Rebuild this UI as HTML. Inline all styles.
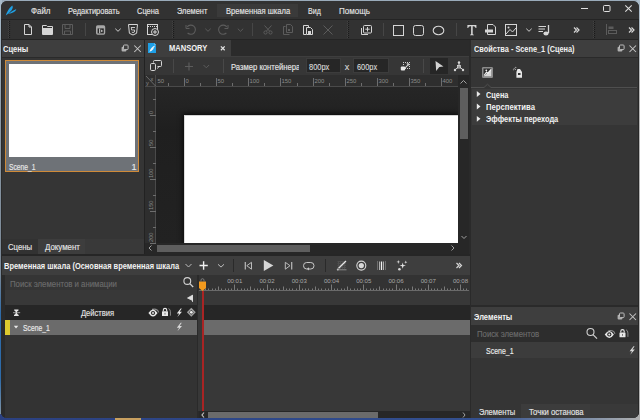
<!DOCTYPE html>
<html><head><meta charset="utf-8">
<style>
*{margin:0;padding:0;box-sizing:border-box}
html,body{width:640px;height:420px;overflow:hidden}
body{position:relative;background:#9aabba;font-family:"Liberation Sans", sans-serif}
.a{position:absolute}
.t{position:absolute;white-space:nowrap;line-height:1}
svg{position:absolute;overflow:visible}
#clip{position:absolute;left:0;top:0;width:640px;height:420px;clip-path:inset(1px 1px 2px 1px round 6px);background:#333}
</style></head><body>
<div class="a" style="left:0;top:0;width:2px;height:420px;background:linear-gradient(#a9bccb,#8a98a5 30%,#7a8896 65%,#2d6aa8 75%,#2d6aa8 90%,#8d9aa5)"></div><div class="a" style="left:637px;top:0;width:3px;height:420px;background:linear-gradient(#a9bccb,#b5b5b5 20%,#b0b0b0)"></div><div class="a" style="left:0;top:414px;width:640px;height:6px;background:linear-gradient(90deg,#2b4080,#2f4a8c 50%,#34508f 75%,#8090a8 92%,#b0b0b0)"></div><div class="a" style="left:115px;top:418px;width:26px;height:2px;background:#c8a060"></div>
<div id="clip">
<div class="a" style="left:0px;top:0px;width:640px;height:19px;background:#323232;"></div><div class="a" style="left:0px;top:19px;width:640px;height:1px;background:#242424;"></div><div class="a" style="left:0px;top:20px;width:640px;height:19px;background:#323232;"></div><div class="a" style="left:0px;top:39px;width:640px;height:1px;background:#242424;"></div><div class="a" style="left:217px;top:4px;width:81px;height:13px;background:#3a3a3a;"></div><div class="a" style="left:0px;top:40px;width:144px;height:215px;background:#353535;"></div><div class="a" style="left:0px;top:40px;width:144px;height:17px;background:#3e3e3e;"></div><div class="a" style="left:0px;top:57px;width:144px;height:1px;background:#2a2a2a;"></div><div class="a" style="left:144px;top:40px;width:1px;height:215px;background:#222;"></div><div class="a" style="left:5px;top:60px;width:134px;height:112px;background:#cf8a38;"></div><div class="a" style="left:6px;top:61px;width:132px;height:110px;background:#6e7277;"></div><div class="a" style="left:9px;top:64px;width:126px;height:93px;background:#ffffff;"></div><div class="a" style="left:145px;top:40px;width:325px;height:16px;background:#2b2b2b;"></div><div class="a" style="left:145px;top:56px;width:325px;height:1px;background:#3e3e3e;"></div><div class="a" style="left:145px;top:40px;width:86px;height:17px;background:#3e3e3e;"></div><div class="a" style="left:145px;top:57px;width:325px;height:18px;background:#363636;"></div><div class="a" style="left:145px;top:75px;width:313px;height:11px;background:#2e2e2e;"></div><div class="a" style="left:145px;top:86px;width:313px;height:1px;background:#4a4a4a;"></div><div class="a" style="left:155px;top:75px;width:1px;height:168px;background:#4a4a4a;"></div><div class="a" style="left:156px;top:87px;width:302px;height:156px;background:linear-gradient(#262626,#1f1f1f 28%,#222 100%);"></div><div class="a" style="left:145px;top:87px;width:10px;height:156px;background:#2e2e2e;"></div><div class="a" style="left:184px;top:115px;width:274px;height:128px;background:#ffffff;box-shadow:0 0 5px 1px rgba(0,0,0,0.75);border-top:1px solid #d4d4d4;border-left:1px solid #dcdcdc"></div><div class="a" style="left:458px;top:75px;width:11px;height:168px;background:#272727;"></div><div class="a" style="left:460px;top:88px;width:8px;height:51px;background:#5e5e5e;"></div><div class="a" style="left:145px;top:243px;width:324px;height:11px;background:#272727;"></div><div class="a" style="left:157px;top:245px;width:153px;height:7px;background:#5e5e5e;"></div><div class="a" style="left:469px;top:40px;width:2px;height:380px;background:#2a2a2a;"></div><div class="a" style="left:298.5px;top:58px;width:7.5px;height:16px;background:#363636;z-index:5"></div><div class="a" style="left:306px;top:58px;width:35px;height:15px;background:#262626;border:1px solid #3c3c3c"></div><div class="a" style="left:353px;top:58px;width:36px;height:15px;background:#262626;border:1px solid #3c3c3c"></div><div class="a" style="left:430px;top:58px;width:18px;height:16px;background:#262626;"></div><div class="a" style="left:471px;top:40px;width:169px;height:266px;background:#353535;"></div><div class="a" style="left:471px;top:40px;width:169px;height:17px;background:#3e3e3e;"></div><div class="a" style="left:471px;top:57px;width:169px;height:1px;background:#2a2a2a;"></div><div class="a" style="left:472px;top:89px;width:165px;height:36px;background:#3c3c3c;"></div><div class="a" style="left:471px;top:305px;width:169px;height:2px;background:#2a2a2a;"></div><div class="a" style="left:471px;top:307px;width:169px;height:18px;background:#3e3e3e;"></div><div class="a" style="left:471px;top:325px;width:169px;height:17px;background:#2d2d2d;"></div><div class="a" style="left:471px;top:342px;width:169px;height:16px;background:#3c3c3c;"></div><div class="a" style="left:471px;top:358px;width:169px;height:46px;background:#353535;"></div><div class="a" style="left:471px;top:404px;width:169px;height:16px;background:#353535;"></div><div class="a" style="left:521px;top:404px;width:69px;height:16px;background:#3c3c3c;"></div><div class="a" style="left:590px;top:404px;width:50px;height:16px;background:#393939;"></div><div class="a" style="left:0px;top:239px;width:38px;height:15px;background:#323232;"></div><div class="a" style="left:38px;top:239px;width:47px;height:15px;background:#3d3d3d;"></div><div class="a" style="left:85px;top:239px;width:59px;height:15px;background:#393939;"></div><div class="a" style="left:0px;top:254px;width:470px;height:2px;background:#262626;"></div><div class="a" style="left:0px;top:256px;width:470px;height:19px;background:#3e3e3e;"></div><div class="a" style="left:0px;top:275px;width:197px;height:145px;background:#333333;"></div><div class="a" style="left:0px;top:275px;width:197px;height:15px;background:#353535;"></div><div class="a" style="left:0px;top:290px;width:197px;height:15px;background:#383838;"></div><div class="a" style="left:0px;top:305px;width:197px;height:15px;background:#262626;"></div><div class="a" style="left:0px;top:320px;width:197px;height:15px;background:#6b6b6b;"></div><div class="a" style="left:5px;top:320px;width:5px;height:15px;background:#dcc92e;"></div><div class="a" style="left:197px;top:275px;width:2px;height:145px;background:#2a2a2a;"></div><div class="a" style="left:199px;top:275px;width:271px;height:15px;background:#333333;"></div><div class="a" style="left:199px;top:290px;width:271px;height:15px;background:#383838;"></div><div class="a" style="left:199px;top:305px;width:271px;height:15px;background:#262626;"></div><div class="a" style="left:199px;top:320px;width:271px;height:15px;background:#6b6b6b;"></div><div class="a" style="left:199px;top:335px;width:271px;height:76px;background:#383838;"></div><div class="a" style="left:199px;top:411px;width:271px;height:9px;background:#272727;"></div><div class="a" style="left:208px;top:412px;width:170px;height:6px;background:#6b6b6b;"></div><div class="a" style="left:198px;top:290px;width:4px;height:121px;background:#383838;"></div><div class="a" style="left:202px;top:290px;width:2px;height:121px;background:#a92424;"></div><div class="a" style="left:1px;top:20px;width:1px;height:400px;background:#2a2a2a;"></div><div class="a" style="left:1px;top:275px;width:4px;height:143px;background:#2a2a2a;"></div><div class="a" style="left:638px;top:20px;width:1px;height:400px;background:#282828;"></div>
<svg style="left:0;top:0" width="640" height="420" viewBox="0 0 640 420"><path d="M5.8,15.4 Q7.6,9.4 12.2,5.4 Q13.6,7 11.6,10.2 Q9.4,13.2 5.8,15.4 Z M8.4,14 Q12,10.6 16.4,9 Q15.8,11.2 13.6,12.2 Q11.2,13.4 8.4,14 Z" fill="#1fa0e4"/><line x1="9.5" y1="21" x2="9.5" y2="38" stroke="#1a1a1a" stroke-width="1.2" stroke-dasharray="1,1"/><line x1="8.5" y1="21" x2="8.5" y2="38" stroke="#424242" stroke-width="1" stroke-dasharray="1,1"/><line x1="173.5" y1="21" x2="173.5" y2="38" stroke="#1a1a1a" stroke-width="1.2" stroke-dasharray="1,1"/><line x1="172.5" y1="21" x2="172.5" y2="38" stroke="#424242" stroke-width="1" stroke-dasharray="1,1"/><line x1="348.5" y1="21" x2="348.5" y2="38" stroke="#1a1a1a" stroke-width="1.2" stroke-dasharray="1,1"/><line x1="347.5" y1="21" x2="347.5" y2="38" stroke="#424242" stroke-width="1" stroke-dasharray="1,1"/><line x1="594.5" y1="21" x2="594.5" y2="38" stroke="#1a1a1a" stroke-width="1.2" stroke-dasharray="1,1"/><line x1="593.5" y1="21" x2="593.5" y2="38" stroke="#424242" stroke-width="1" stroke-dasharray="1,1"/><line x1="85.5" y1="23" x2="85.5" y2="36" stroke="#464646"/><line x1="252.5" y1="23" x2="252.5" y2="36" stroke="#464646"/><line x1="383.5" y1="23" x2="383.5" y2="36" stroke="#464646"/><line x1="456.5" y1="23" x2="456.5" y2="36" stroke="#464646"/><path d="M24.5,24.5 H29 L31.5,27 V34.5 H24.5 Z M29,24.5 V27 H31.5" fill="none" stroke="#d6d6d6"/><path d="M42.5,25.5 H46.5 L47.5,26.5 H52.5 V34.5 H42.5 Z" fill="none" stroke="#d6d6d6"/><rect x="43" y="28" width="10" height="6" fill="#d6d6d6"/><path d="M62.5,24.5 H72.5 V34.5 H62.5 Z M65,24.5 V28.5 H70 V24.5 M64.5,34.5 V31 H70.5 V34.5" fill="none" stroke="#5c5c5c"/><rect x="96" y="25.3" width="9.2" height="9.4" rx="1.6" fill="#a8a8a8"/><rect x="97.6" y="28.4" width="6.2" height="5" fill="#2a2a2a"/><rect x="99.2" y="28.6" width="1" height="4.6" fill="#d8d8d8"/><path d="M101.2,29.6 L103,30.9 L101.2,32.2 Z" fill="#d8d8d8"/><polyline points="115.3,28.7 118,31.3 120.7,28.7" fill="none" stroke="#d6d6d6" stroke-width="0.95"/><polyline points="205.3,28.7 208,31.3 210.7,28.7" fill="none" stroke="#5c5c5c" stroke-width="0.95"/><polyline points="237.8,28.7 240.5,31.3 243.2,28.7" fill="none" stroke="#5c5c5c" stroke-width="0.95"/><polyline points="526.3,28.7 529,31.3 531.7,28.7" fill="none" stroke="#d6d6d6" stroke-width="0.95"/><path d="M128.5,24.5 H137.5 L136.6,33.3 L133,35 L129.4,33.3 Z" fill="none" stroke="#d6d6d6"/><path d="M131,27.5 H135 M131.3,27.5 L131.6,30 H134.6 L134.4,32 L133,32.6 L131.8,32" fill="none" stroke="#d6d6d6" stroke-width="0.9"/><rect x="147.5" y="24.5" width="10" height="10" fill="none" stroke="#d6d6d6"/><line x1="148" y1="26.5" x2="157" y2="26.5" stroke="#d6d6d6" stroke-width="1" stroke-dasharray="1,1"/><circle cx="155" cy="32" r="3.5" fill="#323232" stroke="#d6d6d6"/><path d="M153,32 H157 M155,30 V34" stroke="#d6d6d6"/><path d="M187.2,26.8 A4.6,4.6 0 1 1 187.6,33" fill="none" stroke="#5c5c5c" stroke-width="1.1"/><path d="M186,25 V28.5 H189.5" fill="none" stroke="#5c5c5c"/><path d="M226.8,26.8 A4.6,4.6 0 1 0 226.4,33" fill="none" stroke="#5c5c5c" stroke-width="1.1"/><path d="M228,25 V28.5 H224.5" fill="none" stroke="#5c5c5c"/><circle cx="265.5" cy="32.5" r="1.6" fill="none" stroke="#5c5c5c"/><circle cx="270.5" cy="32.5" r="1.6" fill="none" stroke="#5c5c5c"/><path d="M264.5,25.5 L269.5,31 M271.5,25.5 L266.5,31" stroke="#5c5c5c"/><path d="M285.5,26.5 H283.5 V34.5 H289.5 M286.5,24.5 H290.5 L292.5,26.5 V32.5 H286.5 Z" fill="none" stroke="#5c5c5c"/><rect x="288" y="29" width="2" height="2" fill="#5c5c5c"/><path d="M303.5,25.5 H308.5 V27 M303.5,25.5 V34.5 H306" fill="none" stroke="#d6d6d6"/><path d="M306.5,27.5 H310.5 L312.5,29.5 V34.5 H306.5 Z" fill="none" stroke="#d6d6d6"/><rect x="308" y="31" width="3" height="3" fill="#d6d6d6"/><path d="M323.5,25.5 L332.5,34.5 M332.5,25.5 L323.5,34.5" stroke="#5c5c5c"/><path d="M361.5,28 V34.5 H368" fill="none" stroke="#d6d6d6" stroke-width="1"/><rect x="363.5" y="25.5" width="8" height="7.5" rx="1" fill="#323232" stroke="#d6d6d6"/><path d="M365.3,29.2 H369.7 M367.5,27 V31.5" stroke="#d6d6d6"/><rect x="393.5" y="25.5" width="10" height="10" fill="none" stroke="#d6d6d6"/><rect x="413.5" y="25.5" width="10" height="10" rx="2" fill="none" stroke="#d6d6d6"/><ellipse cx="438.5" cy="30.5" rx="5.3" ry="4.3" fill="none" stroke="#d6d6d6" stroke-width="1.1"/><path d="M467.4,25 H476.4 V28 H475.6 Q475.4,26.3 473.7,26.2 H472.7 V34 Q472.7,34.6 473.9,34.7 V35.3 H469.9 V34.7 Q471.1,34.6 471.1,34 V26.2 H470.1 Q468.4,26.3 468.2,28 H467.4 Z" fill="#d6d6d6"/><path d="M487.5,24.5 H493 L495.5,27 V34.5 H487.5 Z" fill="none" stroke="#d6d6d6"/><rect x="485" y="29.5" width="8" height="3" fill="#d6d6d6"/><rect x="505.5" y="24.5" width="11" height="11" fill="none" stroke="#d6d6d6"/><path d="M506,34 L510,29.5 L512.5,32 L516,28" fill="none" stroke="#d6d6d6"/><circle cx="508.5" cy="27.5" r="1" fill="#d6d6d6"/><path d="M538.5,26.5 H546 M538.5,29 H545 M538.5,31.5 H543" stroke="#d6d6d6"/><path d="M548.5,25 V33" stroke="#d6d6d6" stroke-width="1.3"/><ellipse cx="546" cy="33.5" rx="2.6" ry="1.9" fill="#d6d6d6"/><path d="M574,27.5 L576.5,30 L574,32.5 M576.5,27.5 L579,30 L576.5,32.5" fill="none" stroke="#d6d6d6" stroke-width="1.2"/><path d="M629,27.5 L631.5,30 L629,32.5 M631.5,27.5 L634,30 L631.5,32.5" fill="none" stroke="#d6d6d6" stroke-width="1.2"/><path d="M456.5,263.0 L459.0,265.5 L456.5,268.0 M459.0,263.0 L461.5,265.5 L459.0,268.0" fill="none" stroke="#d6d6d6" stroke-width="1.2"/><path d="M606.5,24 V35" stroke="#5c5c5c"/><rect x="608.5" y="26.5" width="5" height="2.5" fill="#5c5c5c"/><rect x="608.5" y="30.5" width="8" height="3" fill="none" stroke="#5c5c5c"/><path d="M581,8.5 H588" stroke="#e0e0e0"/><rect x="603.5" y="5.5" width="6.5" height="6" rx="1" fill="none" stroke="#e0e0e0"/><path d="M625.3,5.3 L631.7,11.7 M631.7,5.3 L625.3,11.7" stroke="#e0e0e0" stroke-width="1.05"/><rect x="121.6" y="46.7" width="4.8" height="4.8" rx="1.1" fill="#b0b0b0"/><rect x="123.5" y="45.0" width="4.6" height="4.6" rx="0.9" fill="#3e3e3e" stroke="#bcbcbc" stroke-width="1"/><path d="M134.3,45.5 L140.8,52.0 M140.8,45.5 L134.3,52.0" stroke="#c8c8c8" stroke-width="1.05"/><rect x="617.6" y="46.7" width="4.8" height="4.8" rx="1.1" fill="#b0b0b0"/><rect x="619.5" y="45.0" width="4.6" height="4.6" rx="0.9" fill="#3e3e3e" stroke="#bcbcbc" stroke-width="1"/><path d="M629.5,45.5 L636.0,52.0 M636.0,45.5 L629.5,52.0" stroke="#c8c8c8" stroke-width="1.05"/><rect x="617.6" y="314.7" width="4.8" height="4.8" rx="1.1" fill="#b0b0b0"/><rect x="619.5" y="313.0" width="4.6" height="4.6" rx="0.9" fill="#3e3e3e" stroke="#bcbcbc" stroke-width="1"/><path d="M629.5,313.5 L636.0,320.0 M636.0,313.5 L629.5,320.0" stroke="#c8c8c8" stroke-width="1.05"/><path d="M148,43 H154.3 L156,44.7 V53 H148 Z" fill="#1e9fe6"/><path d="M154.3,43 V44.7 H156" fill="#8fd0f4"/><path d="M149.4,51.8 Q150.6,47.2 155,45.4 Q154.6,47.6 153,48.2 L154,48.6 Q152.2,51 149.4,51.8 Z" fill="#eef3f7"/><path d="M220.9,46.4 L224.7,50.2 M224.7,46.4 L220.9,50.2" stroke="#e0e0e0" stroke-width="1.3"/><path d="M153.5,62.5 V61.5 Q153.5,60.5 154.5,60.5 H160.5 Q161.5,60.5 161.5,61.5 V65.5 Q161.5,66.5 160.5,66.5 H157.5" fill="none" stroke="#d6d6d6"/><rect x="150.5" y="63.5" width="5" height="7" rx="1.2" fill="#363636" stroke="#d6d6d6"/><path d="M159,66.8 L157,68.6" stroke="#d6d6d6" stroke-width="0.9"/><line x1="173.5" y1="59" x2="173.5" y2="73" stroke="#484848"/><line x1="223.5" y1="59" x2="223.5" y2="73" stroke="#484848"/><line x1="423.5" y1="59" x2="423.5" y2="73" stroke="#484848"/><path d="M185,66.5 H193 M189,62.5 V70.5" stroke="#5c5c5c" stroke-width="1.2"/><polyline points="203.5,65 206.3,67.8 209.1,65" fill="none" stroke="#5c5c5c"/><rect x="403" y="62" width="1" height="1" fill="#d0d0d0"/><rect x="405" y="62" width="1" height="1" fill="#d0d0d0"/><rect x="407" y="62" width="1" height="1" fill="#d0d0d0"/><rect x="409" y="62" width="1" height="1" fill="#d0d0d0"/><rect x="409" y="64" width="1" height="1" fill="#d0d0d0"/><rect x="409" y="66" width="1" height="1" fill="#d0d0d0"/><rect x="409" y="68" width="1" height="1" fill="#d0d0d0"/><rect x="407" y="68" width="1" height="1" fill="#d0d0d0"/><rect x="405" y="68" width="1" height="1" fill="#d0d0d0"/><rect x="403" y="64" width="1" height="1" fill="#d0d0d0"/><path d="M405.2,67.8 L407.8,65.2" stroke="#d8d8d8" stroke-width="1.1"/><path d="M406.3,63.6 L409,63.2 L408.6,65.9 Z" fill="#e0e0e0"/><rect x="400.8" y="66.6" width="4.3" height="3.8" rx="1" fill="#e8e8e8"/><path d="M435.5,61 L443.5,66.5 L439.3,67 L436.2,71 Z" fill="#d2d2d2"/><path d="M459,63 V66.5 L455,69.8 M459,66.5 L463,69.8" stroke="#d6d6d6" fill="none"/><circle cx="459" cy="62.5" r="1.2" fill="#d6d6d6"/><circle cx="455" cy="70" r="1.2" fill="#d6d6d6"/><circle cx="463" cy="70" r="1.2" fill="#d6d6d6"/><rect x="457.5" y="65.5" width="3" height="2.5" fill="none" stroke="#d6d6d6" stroke-width="0.8"/><polyline points="460.5,83.5 463.5,80.5 466.5,83.5" fill="none" stroke="#a0a0a0"/><polyline points="461.5,236 464,238.5 466.5,236" fill="none" stroke="#a0a0a0"/><polyline points="151.5,245.5 149,248 151.5,250.5" fill="none" stroke="#a0a0a0"/><polyline points="451.5,245.5 454,248 451.5,250.5" fill="none" stroke="#a0a0a0"/><polyline points="204,412.5 202,415 204,417.5" fill="none" stroke="#c0c0c0" stroke-width="1.2"/><polyline points="463,412.5 465,415 463,417.5" fill="none" stroke="#a0a0a0"/><rect x="482" y="67" width="11" height="11" rx="1.2" fill="#8c8c8c"/><path d="M483.5,68.5 H491.5 V76.5 H483.5 Z" fill="#2e2e2e"/><path d="M483.5,76.5 L491.5,68.5 V76.5 Z" fill="#d8d8d8"/><path d="M484,75.5 L486.5,72 L488,73.5 L491,69.5" stroke="#f0f0f0" stroke-width="1.1" fill="none"/><circle cx="486.3" cy="70.3" r="0.9" fill="#f0f0f0"/><path d="M517.5,69 H520 L522,72 V77.8 H516.4 V72 Z" fill="#e8e8e8"/><path d="M518,73 H520.5 V75 H518 Z" fill="#333"/><circle cx="514.2" cy="68.2" r="0.55" fill="#c0c0c0"/><circle cx="515.8" cy="67.4" r="0.55" fill="#c0c0c0"/><circle cx="513.4" cy="69.8" r="0.55" fill="#c0c0c0"/><circle cx="515.3" cy="69.4" r="0.55" fill="#c0c0c0"/><path d="M471,87.5 H484 L487.5,84.2 L491,87.5 H637" fill="none" stroke="#4f4f4f"/><path d="M476.8,91.1 L480.5,94 L476.8,96.9 Z" fill="#e8e8e8"/><path d="M476.8,103.6 L480.5,106.5 L476.8,109.4 Z" fill="#e8e8e8"/><path d="M476.8,115.89999999999999 L480.5,118.8 L476.8,121.7 Z" fill="#e8e8e8"/><polyline points="185.5,264 188.5,267 191.5,264" fill="none" stroke="#bdbdbd"/><path d="M199.5,265.5 H207.8 M203.6,261.3 V269.7" stroke="#f0f0f0" stroke-width="1.4"/><polyline points="218,264.3 221,267.1 224,264.3" fill="none" stroke="#bdbdbd"/><line x1="233.5" y1="259" x2="233.5" y2="272" stroke="#2a2a2a"/><line x1="325.5" y1="259" x2="325.5" y2="272" stroke="#2a2a2a"/><path d="M245.3,262 V269.5" stroke="#bbb" stroke-width="1.2"/><path d="M251.5,262.3 L246.8,265.7 L251.5,269.2 Z" fill="none" stroke="#bbb"/><path d="M263.8,260 L273.4,265.5 L263.8,271 Z" fill="#d6d6d6"/><path d="M291.7,262 V269.5" stroke="#bbb" stroke-width="1.2"/><path d="M285.3,262.3 L290,265.7 L285.3,269.2 Z" fill="none" stroke="#bbb"/><rect x="303.5" y="262.5" width="10.5" height="6.5" rx="3.2" fill="none" stroke="#c8c8c8"/><path d="M307,268.8 L309,267.3 V270.5 Z" fill="#c8c8c8"/><path d="M337.5,261.5 H346 M337.5,263.5 H346 M337.5,265.5 H346 M337.5,267.5 H346 M338.5,261 V269 M340.5,261 V269 M342.5,261 V269 M344.5,261 V269" stroke="#4f4f4f" stroke-width="1"/><path d="M338.6,268.2 L346,261" stroke="#e6e6e6" stroke-width="1.3"/><path d="M337,269.8 H346.5" stroke="#8a8a8a"/><circle cx="337.8" cy="269.6" r="1" fill="#bdbdbd"/><circle cx="361.3" cy="265.6" r="4.5" fill="none" stroke="#d8d8d8" stroke-width="1.1"/><circle cx="361.3" cy="265.6" r="2.6" fill="#d8d8d8"/><path d="M377.5,261.5 V270 M385.5,261.5 V270" stroke="#9a9a9a" stroke-dasharray="1,1"/><path d="M379.5,261.5 V270 M383.5,261.5 V270" stroke="#b0b0b0"/><path d="M381.5,261.5 V270" stroke="#f2f2f2" stroke-width="1.3"/><path d="M402.7,262.40000000000003 L403.4,264.90000000000003 L405.9,265.6 L403.4,266.3 L402.7,268.8 L402.0,266.3 L399.5,265.6 L402.0,264.90000000000003 Z M398.3,259.9 L398.75,261.45 L400.3,261.9 L398.75,262.34999999999997 L398.3,263.9 L397.85,262.34999999999997 L396.3,261.9 L397.85,261.45 Z M405.8,260.59999999999997 L406.2,261.8 L407.40000000000003,262.2 L406.2,262.59999999999997 L405.8,263.8 L405.40000000000003,262.59999999999997 L404.2,262.2 L405.40000000000003,261.8 Z " fill="#e6e6e6"/><circle cx="399.4" cy="269.2" r="1.3" fill="#d8d8d8"/></svg><svg style="left:0;top:0" width="640" height="420" viewBox="0 0 640 420"><line x1="168.5" y1="83" x2="168.5" y2="86" stroke="#6e6e6e"/><line x1="184.5" y1="78" x2="184.5" y2="86" stroke="#6e6e6e"/><text x="185.5" y="83" font-family="Liberation Sans" font-size="5.9" fill="#8c8c8c">0</text><line x1="200.5" y1="83" x2="200.5" y2="86" stroke="#6e6e6e"/><line x1="216.5" y1="78" x2="216.5" y2="86" stroke="#6e6e6e"/><text x="217.5" y="83" font-family="Liberation Sans" font-size="5.9" fill="#8c8c8c">50</text><line x1="232.5" y1="83" x2="232.5" y2="86" stroke="#6e6e6e"/><line x1="248.5" y1="78" x2="248.5" y2="86" stroke="#6e6e6e"/><text x="249.5" y="83" font-family="Liberation Sans" font-size="5.9" fill="#8c8c8c">100</text><line x1="264.5" y1="83" x2="264.5" y2="86" stroke="#6e6e6e"/><line x1="280.5" y1="78" x2="280.5" y2="86" stroke="#6e6e6e"/><text x="281.5" y="83" font-family="Liberation Sans" font-size="5.9" fill="#8c8c8c">150</text><line x1="297.5" y1="83" x2="297.5" y2="86" stroke="#6e6e6e"/><line x1="313.5" y1="78" x2="313.5" y2="86" stroke="#6e6e6e"/><text x="314.5" y="83" font-family="Liberation Sans" font-size="5.9" fill="#8c8c8c">200</text><line x1="329.5" y1="83" x2="329.5" y2="86" stroke="#6e6e6e"/><line x1="345.5" y1="78" x2="345.5" y2="86" stroke="#6e6e6e"/><text x="346.5" y="83" font-family="Liberation Sans" font-size="5.9" fill="#8c8c8c">250</text><line x1="361.5" y1="83" x2="361.5" y2="86" stroke="#6e6e6e"/><line x1="377.5" y1="78" x2="377.5" y2="86" stroke="#6e6e6e"/><text x="378.5" y="83" font-family="Liberation Sans" font-size="5.9" fill="#8c8c8c">300</text><line x1="393.5" y1="83" x2="393.5" y2="86" stroke="#6e6e6e"/><line x1="409.5" y1="78" x2="409.5" y2="86" stroke="#6e6e6e"/><text x="410.5" y="83" font-family="Liberation Sans" font-size="5.9" fill="#8c8c8c">350</text><line x1="425.5" y1="83" x2="425.5" y2="86" stroke="#6e6e6e"/><line x1="441.5" y1="78" x2="441.5" y2="86" stroke="#6e6e6e"/><text x="442.5" y="83" font-family="Liberation Sans" font-size="5.9" fill="#8c8c8c">400</text><text x="157.5" y="83" font-family="Liberation Sans" font-size="5.9" fill="#8c8c8c">50</text><line x1="168.5" y1="83" x2="168.5" y2="86" stroke="#6e6e6e"/><rect x="145" y="75" width="10" height="11" fill="#2e2e2e"/><path d="M146,76 L155.5,86" stroke="#7a7a7a" stroke-width="0.8"/><text x="146" y="85" font-family="Liberation Sans" font-size="5.5" fill="#8c8c8c">y</text><text x="150.5" y="80.5" font-family="Liberation Sans" font-size="5.5" fill="#8c8c8c">x</text><line x1="150" y1="115.5" x2="156" y2="115.5" stroke="#6e6e6e"/><text transform="translate(152.8,114.0) rotate(-90)" x="0" y="0" font-family="Liberation Sans" font-size="5.7" fill="#8c8c8c">0</text><line x1="153" y1="99.5" x2="156" y2="99.5" stroke="#6e6e6e"/><line x1="153" y1="131.5" x2="156" y2="131.5" stroke="#6e6e6e"/><line x1="150" y1="147.5" x2="156" y2="147.5" stroke="#6e6e6e"/><text transform="translate(152.8,146.0) rotate(-90)" x="0" y="0" font-family="Liberation Sans" font-size="5.7" fill="#8c8c8c">50</text><line x1="153" y1="131.5" x2="156" y2="131.5" stroke="#6e6e6e"/><line x1="153" y1="163.5" x2="156" y2="163.5" stroke="#6e6e6e"/><line x1="150" y1="179.5" x2="156" y2="179.5" stroke="#6e6e6e"/><text transform="translate(152.8,178.0) rotate(-90)" x="0" y="0" font-family="Liberation Sans" font-size="5.7" fill="#8c8c8c">100</text><line x1="153" y1="163.5" x2="156" y2="163.5" stroke="#6e6e6e"/><line x1="153" y1="195.5" x2="156" y2="195.5" stroke="#6e6e6e"/><line x1="150" y1="211.5" x2="156" y2="211.5" stroke="#6e6e6e"/><text transform="translate(152.8,210.0) rotate(-90)" x="0" y="0" font-family="Liberation Sans" font-size="5.7" fill="#8c8c8c">150</text><line x1="153" y1="195.5" x2="156" y2="195.5" stroke="#6e6e6e"/><line x1="153" y1="227.5" x2="156" y2="227.5" stroke="#6e6e6e"/><line x1="150" y1="243.5" x2="156" y2="243.5" stroke="#6e6e6e"/><text transform="translate(152.8,242.0) rotate(-90)" x="0" y="0" font-family="Liberation Sans" font-size="5.7" fill="#8c8c8c">200</text><line x1="153" y1="227.5" x2="156" y2="227.5" stroke="#6e6e6e"/><line x1="202.5" y1="284.5" x2="202.5" y2="290" stroke="#7a7a7a" stroke-width="1"/><line x1="205.5" y1="288.5" x2="205.5" y2="290" stroke="#7a7a7a" stroke-width="1"/><line x1="208.5" y1="288.5" x2="208.5" y2="290" stroke="#7a7a7a" stroke-width="1"/><line x1="212.5" y1="288.5" x2="212.5" y2="290" stroke="#7a7a7a" stroke-width="1"/><line x1="215.5" y1="288.5" x2="215.5" y2="290" stroke="#7a7a7a" stroke-width="1"/><line x1="218.5" y1="286.5" x2="218.5" y2="290" stroke="#7a7a7a" stroke-width="1"/><line x1="221.5" y1="288.5" x2="221.5" y2="290" stroke="#7a7a7a" stroke-width="1"/><line x1="225.5" y1="288.5" x2="225.5" y2="290" stroke="#7a7a7a" stroke-width="1"/><line x1="228.5" y1="288.5" x2="228.5" y2="290" stroke="#7a7a7a" stroke-width="1"/><line x1="231.5" y1="288.5" x2="231.5" y2="290" stroke="#7a7a7a" stroke-width="1"/><line x1="234.5" y1="284.5" x2="234.5" y2="290" stroke="#7a7a7a" stroke-width="1"/><text x="234.75" y="283" text-anchor="middle" font-family="Liberation Sans" font-size="6.1" fill="#a8a8a8">00:01</text><line x1="237.5" y1="288.5" x2="237.5" y2="290" stroke="#7a7a7a" stroke-width="1"/><line x1="241.5" y1="288.5" x2="241.5" y2="290" stroke="#7a7a7a" stroke-width="1"/><line x1="244.5" y1="288.5" x2="244.5" y2="290" stroke="#7a7a7a" stroke-width="1"/><line x1="247.5" y1="288.5" x2="247.5" y2="290" stroke="#7a7a7a" stroke-width="1"/><line x1="250.5" y1="286.5" x2="250.5" y2="290" stroke="#7a7a7a" stroke-width="1"/><line x1="254.5" y1="288.5" x2="254.5" y2="290" stroke="#7a7a7a" stroke-width="1"/><line x1="257.5" y1="288.5" x2="257.5" y2="290" stroke="#7a7a7a" stroke-width="1"/><line x1="260.5" y1="288.5" x2="260.5" y2="290" stroke="#7a7a7a" stroke-width="1"/><line x1="263.5" y1="288.5" x2="263.5" y2="290" stroke="#7a7a7a" stroke-width="1"/><line x1="267.5" y1="284.5" x2="267.5" y2="290" stroke="#7a7a7a" stroke-width="1"/><text x="267.00" y="283" text-anchor="middle" font-family="Liberation Sans" font-size="6.1" fill="#a8a8a8">00:02</text><line x1="270.5" y1="288.5" x2="270.5" y2="290" stroke="#7a7a7a" stroke-width="1"/><line x1="273.5" y1="288.5" x2="273.5" y2="290" stroke="#7a7a7a" stroke-width="1"/><line x1="276.5" y1="288.5" x2="276.5" y2="290" stroke="#7a7a7a" stroke-width="1"/><line x1="279.5" y1="288.5" x2="279.5" y2="290" stroke="#7a7a7a" stroke-width="1"/><line x1="283.5" y1="286.5" x2="283.5" y2="290" stroke="#7a7a7a" stroke-width="1"/><line x1="286.5" y1="288.5" x2="286.5" y2="290" stroke="#7a7a7a" stroke-width="1"/><line x1="289.5" y1="288.5" x2="289.5" y2="290" stroke="#7a7a7a" stroke-width="1"/><line x1="292.5" y1="288.5" x2="292.5" y2="290" stroke="#7a7a7a" stroke-width="1"/><line x1="296.5" y1="288.5" x2="296.5" y2="290" stroke="#7a7a7a" stroke-width="1"/><line x1="299.5" y1="284.5" x2="299.5" y2="290" stroke="#7a7a7a" stroke-width="1"/><text x="299.25" y="283" text-anchor="middle" font-family="Liberation Sans" font-size="6.1" fill="#a8a8a8">00:03</text><line x1="302.5" y1="288.5" x2="302.5" y2="290" stroke="#7a7a7a" stroke-width="1"/><line x1="305.5" y1="288.5" x2="305.5" y2="290" stroke="#7a7a7a" stroke-width="1"/><line x1="308.5" y1="288.5" x2="308.5" y2="290" stroke="#7a7a7a" stroke-width="1"/><line x1="312.5" y1="288.5" x2="312.5" y2="290" stroke="#7a7a7a" stroke-width="1"/><line x1="315.5" y1="286.5" x2="315.5" y2="290" stroke="#7a7a7a" stroke-width="1"/><line x1="318.5" y1="288.5" x2="318.5" y2="290" stroke="#7a7a7a" stroke-width="1"/><line x1="321.5" y1="288.5" x2="321.5" y2="290" stroke="#7a7a7a" stroke-width="1"/><line x1="325.5" y1="288.5" x2="325.5" y2="290" stroke="#7a7a7a" stroke-width="1"/><line x1="328.5" y1="288.5" x2="328.5" y2="290" stroke="#7a7a7a" stroke-width="1"/><line x1="331.5" y1="284.5" x2="331.5" y2="290" stroke="#7a7a7a" stroke-width="1"/><text x="331.50" y="283" text-anchor="middle" font-family="Liberation Sans" font-size="6.1" fill="#a8a8a8">00:04</text><line x1="334.5" y1="288.5" x2="334.5" y2="290" stroke="#7a7a7a" stroke-width="1"/><line x1="337.5" y1="288.5" x2="337.5" y2="290" stroke="#7a7a7a" stroke-width="1"/><line x1="341.5" y1="288.5" x2="341.5" y2="290" stroke="#7a7a7a" stroke-width="1"/><line x1="344.5" y1="288.5" x2="344.5" y2="290" stroke="#7a7a7a" stroke-width="1"/><line x1="347.5" y1="286.5" x2="347.5" y2="290" stroke="#7a7a7a" stroke-width="1"/><line x1="350.5" y1="288.5" x2="350.5" y2="290" stroke="#7a7a7a" stroke-width="1"/><line x1="354.5" y1="288.5" x2="354.5" y2="290" stroke="#7a7a7a" stroke-width="1"/><line x1="357.5" y1="288.5" x2="357.5" y2="290" stroke="#7a7a7a" stroke-width="1"/><line x1="360.5" y1="288.5" x2="360.5" y2="290" stroke="#7a7a7a" stroke-width="1"/><line x1="363.5" y1="284.5" x2="363.5" y2="290" stroke="#7a7a7a" stroke-width="1"/><text x="363.75" y="283" text-anchor="middle" font-family="Liberation Sans" font-size="6.1" fill="#a8a8a8">00:05</text><line x1="366.5" y1="288.5" x2="366.5" y2="290" stroke="#7a7a7a" stroke-width="1"/><line x1="370.5" y1="288.5" x2="370.5" y2="290" stroke="#7a7a7a" stroke-width="1"/><line x1="373.5" y1="288.5" x2="373.5" y2="290" stroke="#7a7a7a" stroke-width="1"/><line x1="376.5" y1="288.5" x2="376.5" y2="290" stroke="#7a7a7a" stroke-width="1"/><line x1="379.5" y1="286.5" x2="379.5" y2="290" stroke="#7a7a7a" stroke-width="1"/><line x1="383.5" y1="288.5" x2="383.5" y2="290" stroke="#7a7a7a" stroke-width="1"/><line x1="386.5" y1="288.5" x2="386.5" y2="290" stroke="#7a7a7a" stroke-width="1"/><line x1="389.5" y1="288.5" x2="389.5" y2="290" stroke="#7a7a7a" stroke-width="1"/><line x1="392.5" y1="288.5" x2="392.5" y2="290" stroke="#7a7a7a" stroke-width="1"/><line x1="396.5" y1="284.5" x2="396.5" y2="290" stroke="#7a7a7a" stroke-width="1"/><text x="396.00" y="283" text-anchor="middle" font-family="Liberation Sans" font-size="6.1" fill="#a8a8a8">00:06</text><line x1="399.5" y1="288.5" x2="399.5" y2="290" stroke="#7a7a7a" stroke-width="1"/><line x1="402.5" y1="288.5" x2="402.5" y2="290" stroke="#7a7a7a" stroke-width="1"/><line x1="405.5" y1="288.5" x2="405.5" y2="290" stroke="#7a7a7a" stroke-width="1"/><line x1="408.5" y1="288.5" x2="408.5" y2="290" stroke="#7a7a7a" stroke-width="1"/><line x1="412.5" y1="286.5" x2="412.5" y2="290" stroke="#7a7a7a" stroke-width="1"/><line x1="415.5" y1="288.5" x2="415.5" y2="290" stroke="#7a7a7a" stroke-width="1"/><line x1="418.5" y1="288.5" x2="418.5" y2="290" stroke="#7a7a7a" stroke-width="1"/><line x1="421.5" y1="288.5" x2="421.5" y2="290" stroke="#7a7a7a" stroke-width="1"/><line x1="425.5" y1="288.5" x2="425.5" y2="290" stroke="#7a7a7a" stroke-width="1"/><line x1="428.5" y1="284.5" x2="428.5" y2="290" stroke="#7a7a7a" stroke-width="1"/><text x="428.25" y="283" text-anchor="middle" font-family="Liberation Sans" font-size="6.1" fill="#a8a8a8">00:07</text><line x1="431.5" y1="288.5" x2="431.5" y2="290" stroke="#7a7a7a" stroke-width="1"/><line x1="434.5" y1="288.5" x2="434.5" y2="290" stroke="#7a7a7a" stroke-width="1"/><line x1="437.5" y1="288.5" x2="437.5" y2="290" stroke="#7a7a7a" stroke-width="1"/><line x1="441.5" y1="288.5" x2="441.5" y2="290" stroke="#7a7a7a" stroke-width="1"/><line x1="444.5" y1="286.5" x2="444.5" y2="290" stroke="#7a7a7a" stroke-width="1"/><line x1="447.5" y1="288.5" x2="447.5" y2="290" stroke="#7a7a7a" stroke-width="1"/><line x1="450.5" y1="288.5" x2="450.5" y2="290" stroke="#7a7a7a" stroke-width="1"/><line x1="454.5" y1="288.5" x2="454.5" y2="290" stroke="#7a7a7a" stroke-width="1"/><line x1="457.5" y1="288.5" x2="457.5" y2="290" stroke="#7a7a7a" stroke-width="1"/><line x1="460.5" y1="284.5" x2="460.5" y2="290" stroke="#7a7a7a" stroke-width="1"/><text x="460.50" y="283" text-anchor="middle" font-family="Liberation Sans" font-size="6.1" fill="#a8a8a8">00:08</text><line x1="463.5" y1="288.5" x2="463.5" y2="290" stroke="#7a7a7a" stroke-width="1"/><line x1="466.5" y1="288.5" x2="466.5" y2="290" stroke="#7a7a7a" stroke-width="1"/><line x1="199" y1="290.5" x2="469" y2="290.5" stroke="#6a6a6a"/><path d="M199,281.5 H206 V288 L202.5,291 L199,288 Z" fill="#f39a1e"/><path d="M201,281.5 V280.2 A1.5,1.5 0 0 1 204,280.2 V281.5" fill="none" stroke="#8a8a8a" stroke-width="0.8"/><circle cx="187.3" cy="281" r="3.4" fill="none" stroke="#d0d0d0" stroke-width="1.1"/><path d="M189.8,283.6 L193.2,287" stroke="#d0d0d0" stroke-width="1.3"/><path d="M192.5,295 V302 M192.5,295.2 L187.5,298 L192.5,300.5 Z" fill="#e0e0e0" stroke="#e0e0e0" stroke-width="0.8"/><path d="M14.2,309.4 H18.5 V310.4 Q16.9,311 16.9,312.6 Q16.9,314.2 18.7,315 V316 H14 V315 Q15.8,314.2 15.8,312.6 Q15.8,311 14.2,310.4 Z" fill="#e8e8e8"/><path d="M13,312.7 H20.2" stroke="#bdbdbd" stroke-width="0.8"/><path d="M152,309.4 Q157.6,308.2 158.6,312.4" fill="none" stroke="#8a8a8a" stroke-width="1.1"/><path d="M148.4,313 Q150.8,309.4 153,309.5 Q155.2,309.4 157.6,313 Q155.2,316.6 153,316.5 Q150.8,316.6 148.4,313 Z" fill="#e8e8e8"/><circle cx="153" cy="313" r="2.1" fill="#2a2a2a"/><circle cx="153" cy="313" r="1" fill="#e8e8e8"/><path d="M168.5,308.6 Q170.4,309.1 170.4,311.90000000000003 V315.7" fill="none" stroke="#8a8a8a" stroke-width="1"/><rect x="162" y="311.3" width="6" height="4.7" rx="0.5" fill="#e8e8e8"/><path d="M163.3,311.3 V310.1 A1.7,1.7 0 0 1 166.7,310.1 V311.3" fill="none" stroke="#e8e8e8" stroke-width="1.1"/><rect x="164.5" y="312.8" width="1" height="1.8" fill="#777"/><path d="M180.7,308.5 L176.8,313.4 H179.2 L177.4,316.9 L182.0,311.8 H179.6 L181.8,308.5 Z" fill="#e8e8e8"/><path d="M180.7,322.8 L176.8,327.7 H179.2 L177.4,331.2 L182.0,326.1 H179.6 L181.8,322.8 Z" fill="#d8d8d8"/><path d="M191.3,308.9 L194.7,312.3 L191.3,315.7 L187.9,312.3 Z" fill="none" stroke="#a0a0a0" stroke-width="1.5"/><circle cx="191.3" cy="312.3" r="1.4" fill="#f0f0f0"/><path d="M13.8,325.8 H18.3 L16,328.6 Z" fill="#e8e8e8"/><circle cx="590.5" cy="332" r="3.5" fill="none" stroke="#d0d0d0" stroke-width="1.1"/><path d="M593,334.6 L597,338.6" stroke="#d0d0d0" stroke-width="1.3"/><path d="M608.3,330.79999999999995 Q613.9,329.59999999999997 614.9,333.79999999999995" fill="none" stroke="#8a8a8a" stroke-width="1.1"/><path d="M604.6999999999999,334.4 Q607.0999999999999,330.79999999999995 609.3,330.9 Q611.5,330.79999999999995 613.9,334.4 Q611.5,338.0 609.3,337.9 Q607.0999999999999,338.0 604.6999999999999,334.4 Z" fill="#e8e8e8"/><circle cx="609.3" cy="334.4" r="2.1" fill="#2a2a2a"/><circle cx="609.3" cy="334.4" r="1" fill="#e8e8e8"/><path d="M626.0,329.8 Q627.9,330.3 627.9,333.1 V336.9" fill="none" stroke="#8a8a8a" stroke-width="1"/><rect x="619.5" y="332.5" width="6" height="4.7" rx="0.5" fill="#e8e8e8"/><path d="M620.8,332.5 V331.3 A1.7,1.7 0 0 1 624.2,331.3 V332.5" fill="none" stroke="#e8e8e8" stroke-width="1.1"/><rect x="622.0" y="334.0" width="1" height="1.8" fill="#777"/><path d="M633.5,346.3 L629.5999999999999,351.2 H632.0 L630.1999999999999,354.7 L634.8,349.6 H632.4 L634.5999999999999,346.3 Z" fill="#d8d8d8"/></svg>
<div class="t" style="left:30.9px;top:7.00px;font-size:9px;font-weight:400;color:#e4e4e4;transform:scaleX(0.881);transform-origin:0 0;-webkit-text-stroke:0.15px #e4e4e4;">Файл</div><div class="t" style="left:67.7px;top:7.00px;font-size:9px;font-weight:400;color:#e4e4e4;transform:scaleX(0.830);transform-origin:0 0;-webkit-text-stroke:0.15px #e4e4e4;">Редактировать</div><div class="t" style="left:137.3px;top:7.00px;font-size:9px;font-weight:400;color:#e4e4e4;transform:scaleX(0.829);transform-origin:0 0;-webkit-text-stroke:0.15px #e4e4e4;">Сцена</div><div class="t" style="left:177.2px;top:7.00px;font-size:9px;font-weight:400;color:#e4e4e4;transform:scaleX(0.825);transform-origin:0 0;-webkit-text-stroke:0.15px #e4e4e4;">Элемент</div><div class="t" style="left:225.8px;top:7.00px;font-size:9px;font-weight:400;color:#e4e4e4;transform:scaleX(0.843);transform-origin:0 0;-webkit-text-stroke:0.15px #e4e4e4;">Временная шкала</div><div class="t" style="left:308.4px;top:7.00px;font-size:9px;font-weight:400;color:#e4e4e4;transform:scaleX(0.785);transform-origin:0 0;-webkit-text-stroke:0.15px #e4e4e4;">Вид</div><div class="t" style="left:339.3px;top:7.00px;font-size:9px;font-weight:400;color:#e4e4e4;transform:scaleX(0.892);transform-origin:0 0;-webkit-text-stroke:0.15px #e4e4e4;">Помощь</div><div class="t" style="left:3.3px;top:45.00px;font-size:9px;font-weight:700;color:#f2f2f2;transform:scaleX(0.839);transform-origin:0 0;">Сцены</div><div class="t" style="left:168.9px;top:44.00px;font-size:9px;font-weight:700;color:#f2f2f2;transform:scaleX(0.839);transform-origin:0 0;">MANSORY</div><div class="t" style="left:474.3px;top:45.00px;font-size:9px;font-weight:700;color:#f2f2f2;transform:scaleX(0.815);transform-origin:0 0;">Свойства - Scene_1 (Сцена)</div><div class="t" style="left:8.6px;top:163.00px;font-size:9px;font-weight:400;color:#e8e8e8;transform:scaleX(0.749);transform-origin:0 0;-webkit-text-stroke:0.15px #e8e8e8;">Scene_1</div><div class="t" style="left:131.5px;top:163.00px;font-size:9px;font-weight:400;color:#e8e8e8;-webkit-text-stroke:0.15px #e8e8e8;">1</div><div class="t" style="left:7.7px;top:243.00px;font-size:9px;font-weight:400;color:#e4e4e4;transform:scaleX(0.861);transform-origin:0 0;-webkit-text-stroke:0.15px #e4e4e4;">Сцены</div><div class="t" style="left:45px;top:243.00px;font-size:9px;font-weight:400;color:#e4e4e4;transform:scaleX(0.876);transform-origin:0 0;-webkit-text-stroke:0.15px #e4e4e4;">Документ</div><div class="t" style="left:230.7px;top:63.00px;font-size:9px;font-weight:400;color:#e4e4e4;transform:scaleX(0.850);transform-origin:0 0;-webkit-text-stroke:0.15px #e4e4e4;">Размер контейнера:</div><div class="t" style="left:309px;top:63.00px;font-size:9px;font-weight:400;color:#d8d8d8;transform:scaleX(0.828);transform-origin:0 0;-webkit-text-stroke:0.15px #d8d8d8;">800px</div><div class="t" style="left:344.8px;top:63.00px;font-size:9px;font-weight:400;color:#d8d8d8;-webkit-text-stroke:0.15px #d8d8d8;">x</div><div class="t" style="left:356.6px;top:63.00px;font-size:9px;font-weight:400;color:#d8d8d8;transform:scaleX(0.819);transform-origin:0 0;-webkit-text-stroke:0.15px #d8d8d8;">600px</div><div class="t" style="left:486.3px;top:91.00px;font-size:9px;font-weight:700;color:#f2f2f2;transform:scaleX(0.815);transform-origin:0 0;">Сцена</div><div class="t" style="left:486.3px;top:103.00px;font-size:9px;font-weight:700;color:#f2f2f2;transform:scaleX(0.855);transform-origin:0 0;">Перспектива</div><div class="t" style="left:486.3px;top:115.00px;font-size:9px;font-weight:700;color:#f2f2f2;transform:scaleX(0.822);transform-origin:0 0;">Эффекты перехода</div><div class="t" style="left:4.3px;top:262.00px;font-size:9px;font-weight:700;color:#f2f2f2;transform:scaleX(0.830);transform-origin:0 0;">Временная шкала (Основная временная шкала</div><div class="t" style="left:9.5px;top:280.00px;font-size:9px;font-weight:400;color:#6c6c6c;transform:scaleX(0.866);transform-origin:0 0;-webkit-text-stroke:0.15px #6c6c6c;">Поиск элементов и анимации</div><div class="t" style="left:81px;top:309.00px;font-size:9px;font-weight:400;color:#e4e4e4;transform:scaleX(0.839);transform-origin:0 0;-webkit-text-stroke:0.15px #e4e4e4;">Действия</div><div class="t" style="left:23.2px;top:324.00px;font-size:9px;font-weight:400;color:#ececec;transform:scaleX(0.754);transform-origin:0 0;-webkit-text-stroke:0.15px #ececec;">Scene_1</div><div class="t" style="left:473.8px;top:313.00px;font-size:9px;font-weight:700;color:#f2f2f2;transform:scaleX(0.835);transform-origin:0 0;">Элементы</div><div class="t" style="left:476.5px;top:330.00px;font-size:9px;font-weight:400;color:#6c6c6c;transform:scaleX(0.863);transform-origin:0 0;-webkit-text-stroke:0.15px #6c6c6c;">Поиск элементов</div><div class="t" style="left:486.3px;top:347.00px;font-size:9px;font-weight:400;color:#ececec;transform:scaleX(0.774);transform-origin:0 0;-webkit-text-stroke:0.15px #ececec;">Scene_1</div><div class="t" style="left:478.8px;top:408.00px;font-size:9px;font-weight:400;color:#e4e4e4;transform:scaleX(0.841);transform-origin:0 0;-webkit-text-stroke:0.15px #e4e4e4;">Элементы</div><div class="t" style="left:528.8px;top:408.00px;font-size:9px;font-weight:400;color:#e4e4e4;transform:scaleX(0.854);transform-origin:0 0;-webkit-text-stroke:0.15px #e4e4e4;">Точки останова</div>
</div>
</body></html>
